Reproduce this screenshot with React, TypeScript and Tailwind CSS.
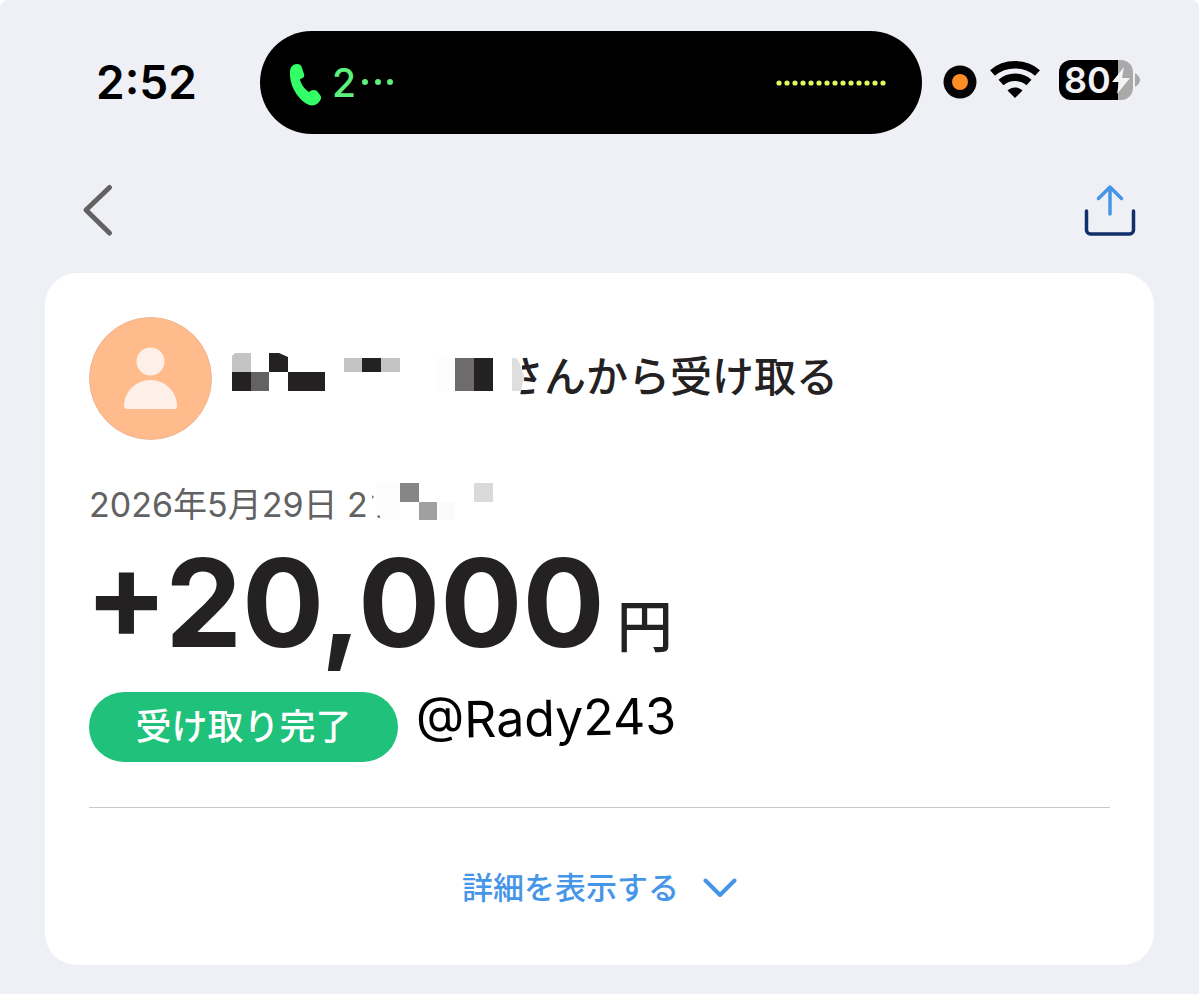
import { useState } from 'react';

const WAVE_DOTS = Array.from({ length: 14 }, (_, i) => i);

type Block = { x: number; y: number; w: number; h: number; fill: string };

const NAME_BLOCKS: Block[] = [
  { x: 0, y: 19, w: 19, h: 19, fill: '#232122' },
  { x: 19, y: 19, w: 18, h: 19, fill: '#646263' },
  { x: 56, y: 19, w: 37, h: 19, fill: '#232122' },
  { x: 112, y: 5, w: 18, h: 14, fill: '#c4c4c4' },
  { x: 130, y: 5, w: 19, h: 14, fill: '#232122' },
  { x: 149, y: 5, w: 19, h: 14, fill: '#c4c4c4' },
  { x: 205, y: 5, w: 18, h: 33, fill: '#fdfdfd' },
  { x: 223, y: 5, w: 19, h: 33, fill: '#6d6b6c' },
  { x: 242, y: 5, w: 19, h: 33, fill: '#232122' },
];

const TIME_BLOCKS: Block[] = [
  { x: 8, y: 0, w: 24, h: 37, fill: '#fcfcfc' },
  { x: 32, y: 0, w: 19, h: 19, fill: '#868686' },
  { x: 51, y: 19, w: 18, h: 18, fill: '#a0a0a0' },
  { x: 69, y: 19, w: 18, h: 18, fill: '#fbfbfb' },
  { x: 106, y: 0, w: 19, h: 19, fill: '#dadada' },
];

function Blocks({ blocks }: { blocks: Block[] }) {
  return blocks.map((b) => (
    <rect key={`${b.x}-${b.y}`} x={b.x} y={b.y} width={b.w} height={b.h} fill={b.fill} />
  ));
}

function StatusBar() {
  return (
    <div className="flex items-start pt-[31px] pr-[59px]">
      <div className="w-[260px] shrink-0 pl-24 pt-[21px] text-[46px] leading-[60px] font-semibold text-black">
        2:52
      </div>

      <div className="flex h-[103px] flex-1 items-center justify-between rounded-full bg-black pr-9 pl-[30px]">
        <div className="flex items-center gap-2.5 text-[#33ff66]">
          <svg width="32" height="46" viewBox="0 0 32 46" fill="currentColor" aria-hidden="true">
            <path d="M0 12C0 7 3 4 7 4c3 0 4 1 5 4l2 6c1 3-1 4-4 5 0 4 6 12 9 13 2-2 5-3 8-1l3 4c2 2 1 5-1 7-2 3-6 4-10 3C9 41-1 26 0 12Z" />
          </svg>
          <div className="flex items-center gap-1.5 text-[#5df07b]">
            <span className="text-[39px] leading-12 font-medium">2</span>
            <svg width="32" height="8" viewBox="0 0 32 8" fill="currentColor" aria-hidden="true">
              <circle cx="3" cy="3" r="3" />
              <circle cx="16" cy="3" r="3" />
              <circle cx="28" cy="3" r="3" />
            </svg>
          </div>
        </div>
        <svg width="110" height="6" viewBox="0 0 110 6" fill="#e2f860" aria-hidden="true">
          {WAVE_DOTS.map((i) => (
            <circle key={i} cx={3 + i * 8} cy="3" r="2.6" />
          ))}
        </svg>
      </div>

      <div className="flex items-center pt-[29px] pl-[21px]">
        <svg className="mt-1" width="34" height="34" viewBox="0 0 34 34" aria-hidden="true">
          <circle cx="17" cy="17" r="16.5" fill="#050505" />
          <circle cx="17" cy="17" r="8" fill="#ff8d28" />
        </svg>
        <svg className="ml-3" width="52" height="40" viewBox="0 0 52 40" aria-hidden="true">
          <path d="M3.500 13C16 2 36 2 48.500 13" fill="none" stroke="#000" strokeWidth="7.500" />
          <path d="M12 22.500C20 15.500 32 15.500 40 22.500" fill="none" stroke="#000" strokeWidth="7.500" />
          <path d="M18.500 30.500C23 26.500 29 26.500 33.500 30.500L26 38Z" fill="#000" />
        </svg>
        <div className="ml-[18px] flex items-center">
          <div className="relative h-10 w-[74px] rounded-xl bg-[linear-gradient(90deg,#000_80%,#a9a9aa_80%)] pl-[5px] text-[36px] leading-10 font-semibold text-[#f2f2f6]">
            80
            <svg className="absolute top-[7px] left-[53px]" width="18" height="27" viewBox="0 0 18 27" aria-hidden="true">
              <path d="M12 0 0 15h7L5 27 18 11h-8Z" fill="#f4f4f7" />
            </svg>
          </div>
          <svg className="ml-0.5" width="5" height="14" viewBox="0 0 5 14" aria-hidden="true">
            <path d="M0 0c3 2 5 4 5 7s-2 5-5 7Z" fill="#a9a9aa" />
          </svg>
        </div>
      </div>
    </div>
  );
}

function NavBar() {
  return (
    <nav className="flex items-center justify-between pt-[46px] pr-[62px] pl-20">
      <button type="button" aria-label="戻る" className="cursor-pointer">
        <svg width="36" height="60" viewBox="0 0 36 60" fill="none" aria-hidden="true">
          <path d="M29.500 7.500 6 30l23.500 23" stroke="#626262" strokeWidth="5" strokeLinecap="round" strokeLinejoin="round" />
        </svg>
      </button>
      <button type="button" aria-label="共有" className="cursor-pointer">
        <svg width="54" height="60" viewBox="0 0 54 60" fill="none" strokeLinecap="round" strokeLinejoin="round" aria-hidden="true">
          <path d="M3.500 31v19a4 4 0 0 0 4 4h39a4 4 0 0 0 4-4V31" stroke="#102f6b" strokeWidth="3.500" />
          <path d="M27 34V7M15.500 18.500 27 7l11.500 11.500" stroke="#4595e8" strokeWidth="3.500" />
        </svg>
      </button>
    </nav>
  );
}

function Avatar() {
  return (
    <svg className="shrink-0" width="123" height="123" viewBox="0 0 123 123" aria-hidden="true">
      <circle cx="61.500" cy="61.500" r="61" fill="#ffbb8c" stroke="#efb592" />
      <circle cx="61.500" cy="44.500" r="14" fill="#fef0e8" />
      <path d="M35 89c0-14 12-26 26.500-26S88 75 88 89q0 3-3 3H38q-3 0-3-3Z" fill="#fef0e8" />
    </svg>
  );
}

export default function App() {
  const [open, setOpen] = useState(false);

  return (
    <main className="min-h-screen rounded-t-lg bg-[#eef0f5] font-['Inter','Noto_Sans_CJK_JP',sans-serif] text-[#232122]">
      <StatusBar />
      <NavBar />

      <section className="mx-[45px] mt-[33px] rounded-[32px] bg-white px-11 pt-11 pb-[52px]">
        <div className="flex items-center">
          <Avatar />
          <div className="relative ml-5 pb-1 pl-[270px]">
            <h1 className="text-[42px] leading-14 font-medium whitespace-nowrap">さんから受け取る</h1>
            <svg className="absolute top-1 left-0" width="300" height="48" viewBox="0 0 300 48" aria-hidden="true">
              <path d="M262 0h24l4 12v22l-3 12h-25Z" fill="#fff" />
              <path d="M0 19V3l3-3h16v19Z" fill="#c4c4c4" />
              <path d="M37 19V0h10l9 4v15Z" fill="#232122" />
              <path d="M280 5h4q4 4 5 10l3 8-3 15h-9Z" fill="#dedede" />
              <Blocks blocks={NAME_BLOCKS} />
            </svg>
          </div>
        </div>

        <div className="mt-[39px] flex items-start">
          <time dateTime="2026-05-29" className="text-[34px] leading-[52px] whitespace-nowrap text-[#626262]">
            2026年5月29日 2
          </time>
          <svg className="mt-1" width="125" height="37" viewBox="0 0 125 37" aria-hidden="true">
            <Blocks blocks={TIME_BLOCKS} />
            <path d="M4 12v4l2-2ZM9 33l2-1 1 1v2h-2Z" fill="#777" />
          </svg>
        </div>

        <p className="mt-2 -ml-1 flex items-baseline gap-3">
          <span className="text-[122px] leading-[128px] font-bold">+20,000</span>
          <span className="text-[56px] leading-16 font-medium">円</span>
        </p>

        <div className="mt-[25px] flex items-start gap-[18px]">
          <span className="flex h-[70px] w-[309px] items-center justify-center rounded-full bg-[#1fc17b] text-[36px] leading-10 font-medium text-white">
            受け取り完了
          </span>
          <span className="-rotate-1 text-[50px] leading-[52px] text-black">@Rady243</span>
        </div>

        <hr className="mt-[45px] border-[#c8c8c8]" />

        <button
          type="button"
          aria-expanded={open}
          onClick={() => setOpen(!open)}
          className="mx-auto mt-[55px] flex cursor-pointer items-center gap-6 text-[31px] leading-[50px] font-medium text-[#4595e8]"
        >
          詳細を表示する
          <svg width="34" height="20" viewBox="0 0 34 20" fill="none" aria-hidden="true">
            <path d="M2.500 2.500 17 17 31.500 2.500" stroke="currentColor" strokeWidth="4" strokeLinecap="round" strokeLinejoin="round" />
          </svg>
        </button>
      </section>
    </main>
  );
}
